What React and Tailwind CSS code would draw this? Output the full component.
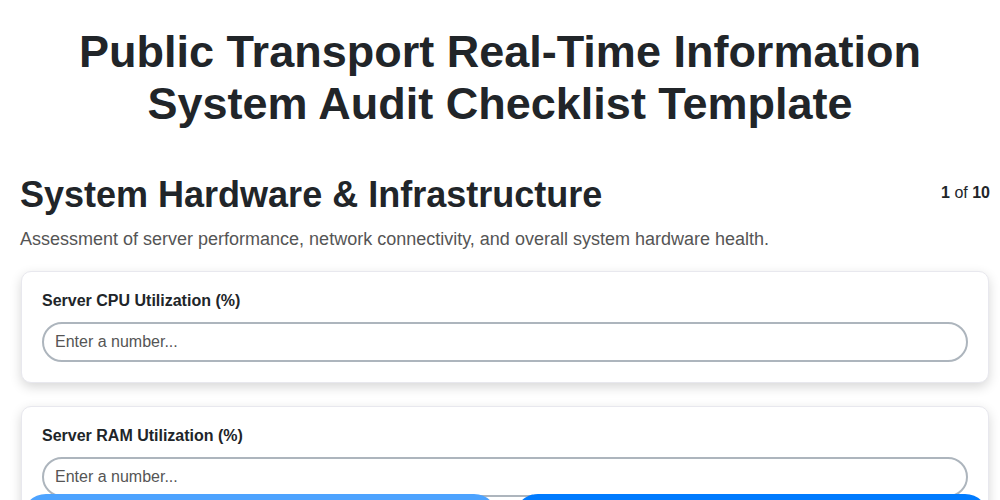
export default function App() {
  const questions = ["Server CPU Utilization (%)", "Server RAM Utilization (%)", "Network Latency (ms)"];

  return (
    <div className="min-h-screen bg-white text-[#212529]" style={{ fontFamily: '"Liberation Sans", Arial, sans-serif' }}>
      <div className="pl-5 pr-[10px] pt-[26px] pb-24">
        <h1 className="text-center text-[45px] font-bold leading-[52px] pl-[30px] pr-[40px]">
          Public Transport Real-Time Information System Audit Checklist Template
        </h1>

        <div className="mt-[43px] flex items-start justify-between">
          <h2 className="text-[36px] font-bold leading-[44px]">System Hardware &amp; Infrastructure</h2>
          <div className="mt-[10px] text-[16px] leading-[20px]">
            <span className="font-bold">1</span> of <span className="font-bold">10</span>
          </div>
        </div>
        <p className="mt-[11px] text-[18px] text-[#555] leading-[22px]">
          Assessment of server performance, network connectivity, and overall system hardware health.
        </p>

        <div className="mt-[21px] flex flex-col gap-[23px]">
          {questions.map((q) => (
            <div key={q} className="mx-px rounded-[10px] border border-[#e8e8ee] bg-white px-5 pt-[19px] pb-[20px] shadow-[0_4px_12px_rgba(0,0,0,0.16)]">
              <label className="block text-[16px] font-bold leading-[20px]">{q}</label>
              <input
                type="number"
                placeholder="Enter a number..."
                className="mt-[11px] block h-[40px] w-full rounded-full border-2 border-[#adb5bd] bg-white px-[11px] text-[16px] text-[#212529] placeholder:text-[#555] outline-none"
              />
            </div>
          ))}
        </div>
      </div>

      <div className="fixed left-[22px] right-[11px] top-[494px] flex gap-4">
        <button className="h-12 flex-1 rounded-full bg-[#4da3ff] text-white font-bold">Previous</button>
        <button className="h-12 flex-1 rounded-full bg-[#007bff] text-white font-bold">Next</button>
      </div>
    </div>
  );
}
